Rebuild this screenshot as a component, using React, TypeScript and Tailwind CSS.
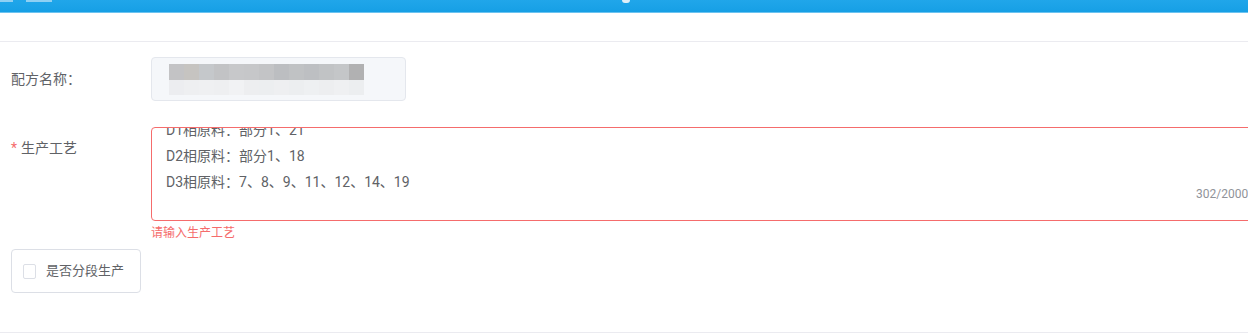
import React from 'react';

const font = { fontFamily: 'Roboto, "Noto Sans CJK SC", sans-serif' };

// pixelated (mosaic) name value, rows of gray blocks
const topRow = ['#c3c3c5', '#c6c4c1', '#c5c8cb', '#c2c3c5', '#c7c8ca', '#c6c7c9', '#c3c4c6', '#bcbec1', '#c0c2c4', '#bdbfc2', '#c1c3c5', '#c4c6c8', '#b1b1b2'];
const bottomRow = ['#ecedf0', '#eeeff1', '#eff0f2', '#eeeff1', '#f1f2f4', '#edeef0', '#eceef0', '#eeeff1', '#eceef0', '#eef0f2', '#edeef0', '#eff0f2', '#eceef0'];

export default function App() {
  return (
    <div className="w-[1248px] h-[334px] bg-white overflow-hidden relative text-[#606266]" style={font}>
      {/* top bar */}
      <div className="h-[13px] bg-gradient-to-b from-[#20a6ea] to-[#169fe5] border-b border-[#6cc3f0] relative">
        <div className="absolute left-0 top-0 w-[13px] h-[2px] bg-[#8fd0f3]" />
        <div className="absolute left-[26px] top-0 w-[26px] h-[2px] bg-[#8fd0f3]" />
        <div className="absolute left-[622px] top-0 w-[8px] h-[3px] rounded-b-full bg-[#dfeff8]" />
      </div>

      <div className="h-[29px] border-b border-[#ebebf0]" />

      {/* 配方名称 */}
      <div className="flex items-center mt-[15px] h-[44px]">
        <div className="w-[151px] shrink-0 pl-[11px] text-[14px]">配方名称：</div>
        <div className="w-[255px] h-[44px] rounded bg-[#f5f7fa] border border-[#e4e7ed] flex flex-col justify-center pl-[17px]">
          <div className="flex">
            {topRow.map((c, i) => (
              <div key={i} className="w-[15px] h-[16px]" style={{ backgroundColor: c }} />
            ))}
          </div>
          <div className="flex">
            {bottomRow.map((c, i) => (
              <div key={i} className="w-[15px] h-[15px]" style={{ backgroundColor: c }} />
            ))}
          </div>
        </div>
      </div>

      {/* 生产工艺 */}
      <div className="flex mt-[26px]">
        <div className="w-[151px] shrink-0 pl-[11px] text-[14px] pt-[11px]">
          <span className="text-[#f56c6c] mr-[4px]">*</span>生产工艺
        </div>
        <div className="shrink-0">
          <div className="relative h-[94px] w-[1110px] border border-[#f56c6c] rounded overflow-hidden">
            <div className="mt-[-11px] pl-[14px] text-[14px] leading-[26px] text-[#606266]">
              <div>D1相原料：部分1、21</div>
              <div>D2相原料：部分1、18</div>
              <div>D3相原料：7、8、9、11、12、14、19</div>
            </div>
            <div className="absolute left-[1044px] top-[57px] text-[12px] text-[#909399]">302/2000</div>
          </div>
          <div className="text-[12px] text-[#f56c6c] leading-[18px] mt-[3px]">请输入生产工艺</div>
        </div>
      </div>

      {/* 是否分段生产 */}
      <div className="ml-[11px] mt-[7px] w-[130px] h-[44px] border border-[#dcdfe6] rounded flex items-center pl-[11px]">
        <div className="w-[13px] h-[15px] border border-[#dcdfe6] rounded-[2px] bg-white" />
        <span className="ml-[10px] text-[13px]">是否分段生产</span>
      </div>

      <div className="absolute left-0 right-0 bottom-[1px] h-px bg-[#ebebf0]" />
    </div>
  );
}
